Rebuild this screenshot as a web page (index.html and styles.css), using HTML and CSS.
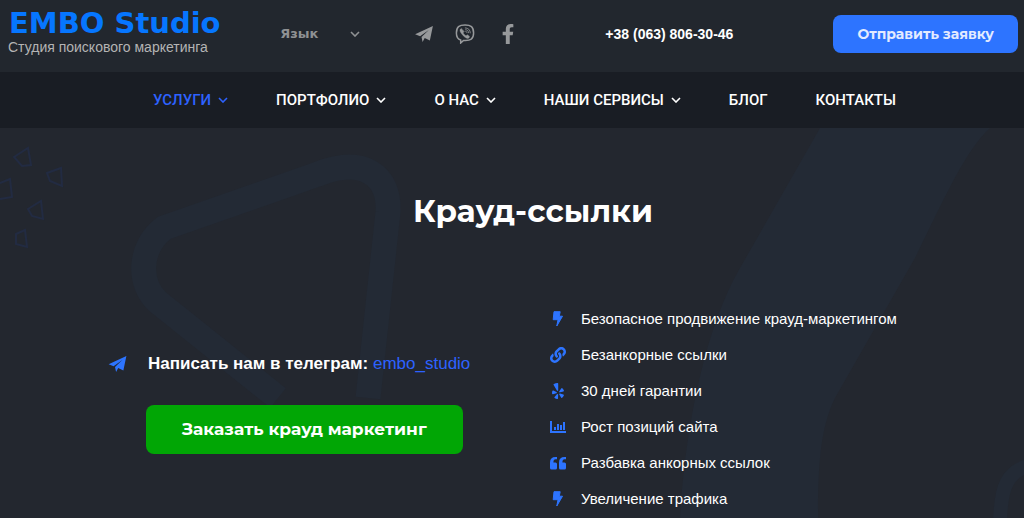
FILE: index.html
```
<!DOCTYPE html>
<html lang="ru">
<head>
<meta charset="utf-8">
<meta name="viewport" content="width=device-width, initial-scale=1">
<title>Крауд-ссылки — EMBO Studio</title>
<link rel="stylesheet" href="styles.css">
</head>
<body>
<svg class="sprite" aria-hidden="true">
  <symbol id="plane" viewBox="0 0 20 18"><path d="M0 9.200 20 0 16.600 16.300 10.800 13.600 8.400 18 7.200 12.400 15.400 4.400 5.600 11.600Z"/></symbol>
  <symbol id="chevron" viewBox="0 0 10 6"><path d="M1 1l4 4 4-4" fill="none" stroke="currentColor" stroke-width="1.600"/></symbol>
  <symbol id="bolt" viewBox="0 0 16 16"><path d="M4 .7h6.200L9.300 5.200H12.500L6.800 15 8 8.700H3.200Z" stroke="currentColor" stroke-width="1" stroke-linejoin="round"/></symbol>
</svg>

<header class="topbar">
  <a class="brand" href="#">
    <span class="brand-name">EMBO Studio</span>
    <span class="brand-tagline">Студия поискового маркетинга</span>
  </a>
  <div class="language">
    <select class="language-select" aria-label="Язык"><option>Язык</option></select>
    <svg class="chevron" aria-hidden="true"><use href="#chevron"/></svg>
  </div>
  <div class="social">
    <a href="#" aria-label="Telegram"><svg class="social-icon"><use href="#plane"/></svg></a>
    <a href="#" aria-label="Viber"><svg class="social-icon social-viber" viewBox="0 0 20 20" fill="none" stroke="currentColor" stroke-linecap="round">
      <path d="M10 1C4.200 1 1.400 2.600 1.400 9c0 4.300 1.300 6.200 4.300 7v3l2.800-2.600c7.300.5 10.100-1.400 10.100-7.400C18.600 2.600 15.800 1 10 1Z" stroke-width="1.500"/>
      <path d="M6.200 4.500c-2 1-1.300 3 .6 5.500s4 4.300 5.900 4.500c1.300 0 2.200-1.800 1.600-2.300l-2-1.400-1.200 1c-1.300-.5-2.400-1.600-3-3l1-1.100Z" fill="currentColor" stroke-width=".4"/>
      <path d="M10.300 3.900c3 .1 5 2 5 5M10.600 5.700c1.800.1 2.900 1.200 2.900 3M10.800 7.400c.7.1 1 .4 1.100 1.100" stroke-width=".8"/></svg></a>
    <a href="#" aria-label="Facebook"><svg class="social-icon social-facebook" viewBox="0 0 320 512"><path d="M279.140 288l14.220-92.660h-88.910v-60.130c0-25.350 12.420-50.060 52.240-50.060h40.420V6.260S260.430 0 225.360 0c-73.220 0-121.080 44.380-121.080 124.720v70.620H22.890V288h81.390v224h100.170V288z"/></svg></a>
  </div>
  <a class="phone" href="tel:+380638063046">+38 (063) 806-30-46</a>
  <button class="button button-request" type="button">Отправить заявку</button>
</header>

<nav class="menu" aria-label="Главное меню">
  <a class="menu-link menu-active" href="#">УСЛУГИ <svg class="chevron"><use href="#chevron"/></svg></a>
  <a class="menu-link" href="#">ПОРТФОЛИО <svg class="chevron"><use href="#chevron"/></svg></a>
  <a class="menu-link" href="#">О НАС <svg class="chevron"><use href="#chevron"/></svg></a>
  <a class="menu-link" href="#">НАШИ СЕРВИСЫ <svg class="chevron"><use href="#chevron"/></svg></a>
  <a class="menu-link" href="#">БЛОГ</a>
  <a class="menu-link" href="#">КОНТАКТЫ</a>
</nav>

<main class="hero">
  <svg class="hero-pattern" viewBox="0 0 1024 390" preserveAspectRatio="xMidYMin slice" aria-hidden="true">
    <g fill="none" stroke="#232a35">
      <path d="M278 270 158 174C138 156 138 120 164 100L318 46C364 28 390 48 388 84L368 270" stroke-width="25"/>
      <path d="M1040 335C1005 340 1000 360 1000 400" stroke-width="14"/>
    </g>
    <path d="M820 0H990C965 22 940 80 915 130L835 270C820 300 818 340 818 390H680C685 300 705 200 740 140Z" fill="#232a35"/>
    <g fill="none" stroke="#222b42" stroke-width="2">
      <path d="M14 29 28 20 31 37 22 38ZM47 45l14-5 1 18-12-5ZM28 81l13-8 2 18-11-3ZM16 106l9-4 2 17-11-3ZM0 55l10-4 2 18-12 2"/>
    </g>
  </svg>
  <h1 class="hero-title">Крауд-ссылки</h1>
  <div class="hero-columns">
    <section class="contact">
      <p class="telegram"><svg class="telegram-icon" aria-hidden="true"><use href="#plane"/></svg><span><strong>Написать нам в телеграм:</strong> <a href="#">embo_studio</a></span></p>
      <button class="button button-order" type="button">Заказать крауд маркетинг</button>
    </section>
    <ul class="features">
      <li><svg class="feature-icon"><use href="#bolt"/></svg>Безопасное продвижение крауд-маркетингом</li>
      <li><svg class="feature-icon" viewBox="0 0 512 512"><path d="M326.612 185.391c59.747 59.809 58.927 155.698.36 214.590-.11.12-.24.25-.36.37l-67.200 67.200c-59.270 59.270-155.699 59.262-214.960 0-59.270-59.260-59.270-155.700 0-214.960l37.106-37.106c9.840-9.840 26.786-3.300 27.294 10.606.648 17.722 3.826 35.527 9.690 52.721 1.986 5.822.567 12.262-3.783 16.612l-13.087 13.087c-28.026 28.026-28.905 73.660-1.155 101.960 28.024 28.579 74.086 28.749 102.325.51l67.200-67.190c28.191-28.191 28.073-73.757 0-101.830-3.701-3.694-7.429-6.564-10.341-8.569a16.037 16.037 0 0 1-6.947-12.606c-.396-10.567 3.348-21.456 11.698-29.806l21.054-21.055c5.521-5.521 14.182-6.199 20.584-1.731a152.482 152.482 0 0 1 20.522 17.197zM467.547 44.449c-59.261-59.262-155.690-59.270-214.960 0l-67.200 67.200c-.12.12-.25.25-.36.37-58.566 58.892-59.387 154.781.36 214.590a152.454 152.454 0 0 0 20.521 17.196c6.402 4.468 15.064 3.789 20.584-1.731l21.054-21.055c8.350-8.350 12.094-19.239 11.698-29.806a16.037 16.037 0 0 0-6.947-12.606c-2.912-2.005-6.640-4.875-10.341-8.569-28.073-28.073-28.191-73.639 0-101.830l67.200-67.190c28.239-28.239 74.300-28.069 102.325.51 27.750 28.300 26.872 73.934-1.155 101.960l-13.087 13.087c-4.350 4.350-5.769 10.790-3.783 16.612 5.864 17.194 9.042 34.999 9.690 52.721.509 13.906 17.454 20.446 27.294 10.606l37.106-37.106c59.271-59.259 59.271-155.699.001-214.959z"/></svg>Безанкорные ссылки</li>
      <li><svg class="feature-icon" viewBox="0 0 384 512"><path d="M42.900 240.320l99.620 48.610c19.200 9.400 16.200 37.510-4.500 42.710L30.500 358.450a22.790 22.790 0 0 1-28.210-19.600 197.160 197.160 0 0 1 9-85.320 22.800 22.800 0 0 1 31.610-13.210zm44 239.250a199.450 199.450 0 0 0 79.420 32.110A22.780 22.780 0 0 0 192.940 490l3.900-110.820c.7-21.300-25.500-31.910-39.810-16.100l-74.210 82.400a22.820 22.820 0 0 0 4.090 34.090zm145.340-109.920l58.810 94a22.930 22.930 0 0 0 34 5.500 198.360 198.360 0 0 0 52.710-67.610A23 23 0 0 0 364.170 370l-105.420-34.260c-20.310-6.500-37.810 15.800-26.510 33.910zm148.330-132.230a197.440 197.440 0 0 0-50.410-69.310 22.850 22.850 0 0 0-34 4.400l-62 91.920c-11.900 17.700 4.700 40.610 25.200 34.710L366 268.630a23 23 0 0 0 14.610-31.210zM62.110 30.180a22.860 22.860 0 0 0-9.900 32l104.120 180.440c11.700 20.200 42.610 11.900 42.610-11.400V22.880a22.670 22.670 0 0 0-24.500-22.800 320.370 320.370 0 0 0-112.330 30.100z"/></svg>30 дней гарантии</li>
      <li><svg class="feature-icon" viewBox="0 0 16 16"><path d="M0 2h2v10h14v2H0ZM4 8h2v3H4ZM7 5h2v6H7ZM10 6h2v5h-2ZM13 3h2v8h-2Z"/></svg>Рост позиций сайта</li>
      <li><svg class="feature-icon" viewBox="0 0 16 16"><path d="M7 2v2.200H5.600Q3.400 4.200 3.400 7.500H5.500Q7 7.500 7 9v4q0 1.500-1.500 1.500h-4Q0 14.500 0 13V7.500Q0 2 5.500 2ZM16 2v2.200h-1.400q-2.200 0-2.200 3.300h2.100Q16 7.500 16 9v4q0 1.500-1.500 1.500h-4Q9 14.500 9 13V7.500Q9 2 14.500 2Z"/></svg>Разбавка анкорных ссылок</li>
      <li><svg class="feature-icon"><use href="#bolt"/></svg>Увеличение трафика</li>
    </ul>
  </div>
</main>
</body>
</html>
```

FILE: styles.css
```
* {
  box-sizing: border-box;
}

body {
  margin: 0;
  min-height: 100vh;
  display: flex;
  flex-direction: column;
  background: #23272f;
  color: #fff;
  font-family: "Liberation Sans", Arial, sans-serif;
}

a {
  color: inherit;
  text-decoration: none;
}

svg {
  fill: currentColor;
}

.sprite {
  position: absolute;
  width: 0;
  height: 0;
}

.topbar {
  display: grid;
  grid-template-columns: 272fr 135fr 190fr 228fr auto;
  align-items: center;
  min-height: 72px;
  padding: 0 6px 4px 8px;
  background: #22272e;
}

.brand {
  display: flex;
  flex-direction: column;
  padding-bottom: 4px;
}

.brand-name {
  padding-left: 1px;
  color: #0676ff;
  font: 700 29px/30px "DejaVu Sans", sans-serif;
}

.brand-tagline {
  color: #b4b4b4;
  font-size: 14px;
  line-height: 18px;
}

.language {
  display: flex;
  align-items: center;
  color: #8f9193;
}

.language-select {
  width: 70px;
  padding: 0;
  border: 0;
  appearance: none;
  background: none;
  color: inherit;
  font: 700 13px/20px "DejaVu Sans", sans-serif;
}

.chevron {
  width: 10px;
  height: 6px;
}

.social {
  display: flex;
  align-items: center;
  gap: 22px;
  color: #97999b;
}

.social a {
  display: flex;
}

.social-icon {
  width: 18px;
  height: 16px;
}

.social-viber {
  width: 20px;
  height: 20px;
  fill: none;
}

.social-facebook {
  width: 22px;
  height: 20px;
}

.phone {
  font-size: 14px;
  font-weight: 700;
}

.button {
  border: 0;
  border-radius: 8px;
  color: #fff;
  font-family: Montserrat, Inter, sans-serif;
  font-weight: 700;
}

.button-request {
  padding: 9px 24px;
  background: #2d74ff;
  color: #e3ebff;
  font-size: 14px;
  line-height: 20px;
}

.menu {
  display: flex;
  justify-content: center;
  flex-wrap: wrap;
  gap: 0 48px;
  padding-left: 25px;
  background: #191d24;
  font-family: Roboto, sans-serif;
  font-size: 15px;
  font-weight: 500;
  line-height: 56px;
}

.menu-link {
  display: flex;
  align-items: center;
  gap: 7px;
}

.menu-active {
  color: #2d62ff;
}

.hero {
  position: relative;
  flex: 1;
  overflow: hidden;
  padding: 63px 16px 0;
}

.hero-pattern {
  position: absolute;
  inset: 0;
  width: 100%;
  height: 100%;
}

.hero-title {
  position: relative;
  margin: 0 0 70px;
  padding-left: 42px;
  font: 700 31px/40px Montserrat, Inter, sans-serif;
  text-align: center;
}

.hero-columns {
  position: relative;
  display: grid;
  grid-template-columns: 442fr 458fr;
  padding: 0 0 0 92px;
}

.contact {
  padding-top: 51px;
}

.telegram {
  display: flex;
  align-items: center;
  gap: 21px;
  margin: 0 0 29px;
  font-size: 17px;
  line-height: 24px;
}

.telegram a {
  color: #2d62ff;
}

.telegram-icon {
  width: 19px;
  height: 16px;
  color: #2d74ff;
}

.button-order {
  margin-left: 38px;
  padding: 12px 36px;
  background: #01a605;
  font-size: 17px;
  line-height: 25px;
}

.features {
  margin: 0;
  padding: 0;
  list-style: none;
  font-size: 15px;
  line-height: 36px;
}

.features li {
  display: flex;
  align-items: center;
  gap: 15px;
}

.feature-icon {
  width: 16px;
  height: 16px;
  color: #2d74ff;
}
```
